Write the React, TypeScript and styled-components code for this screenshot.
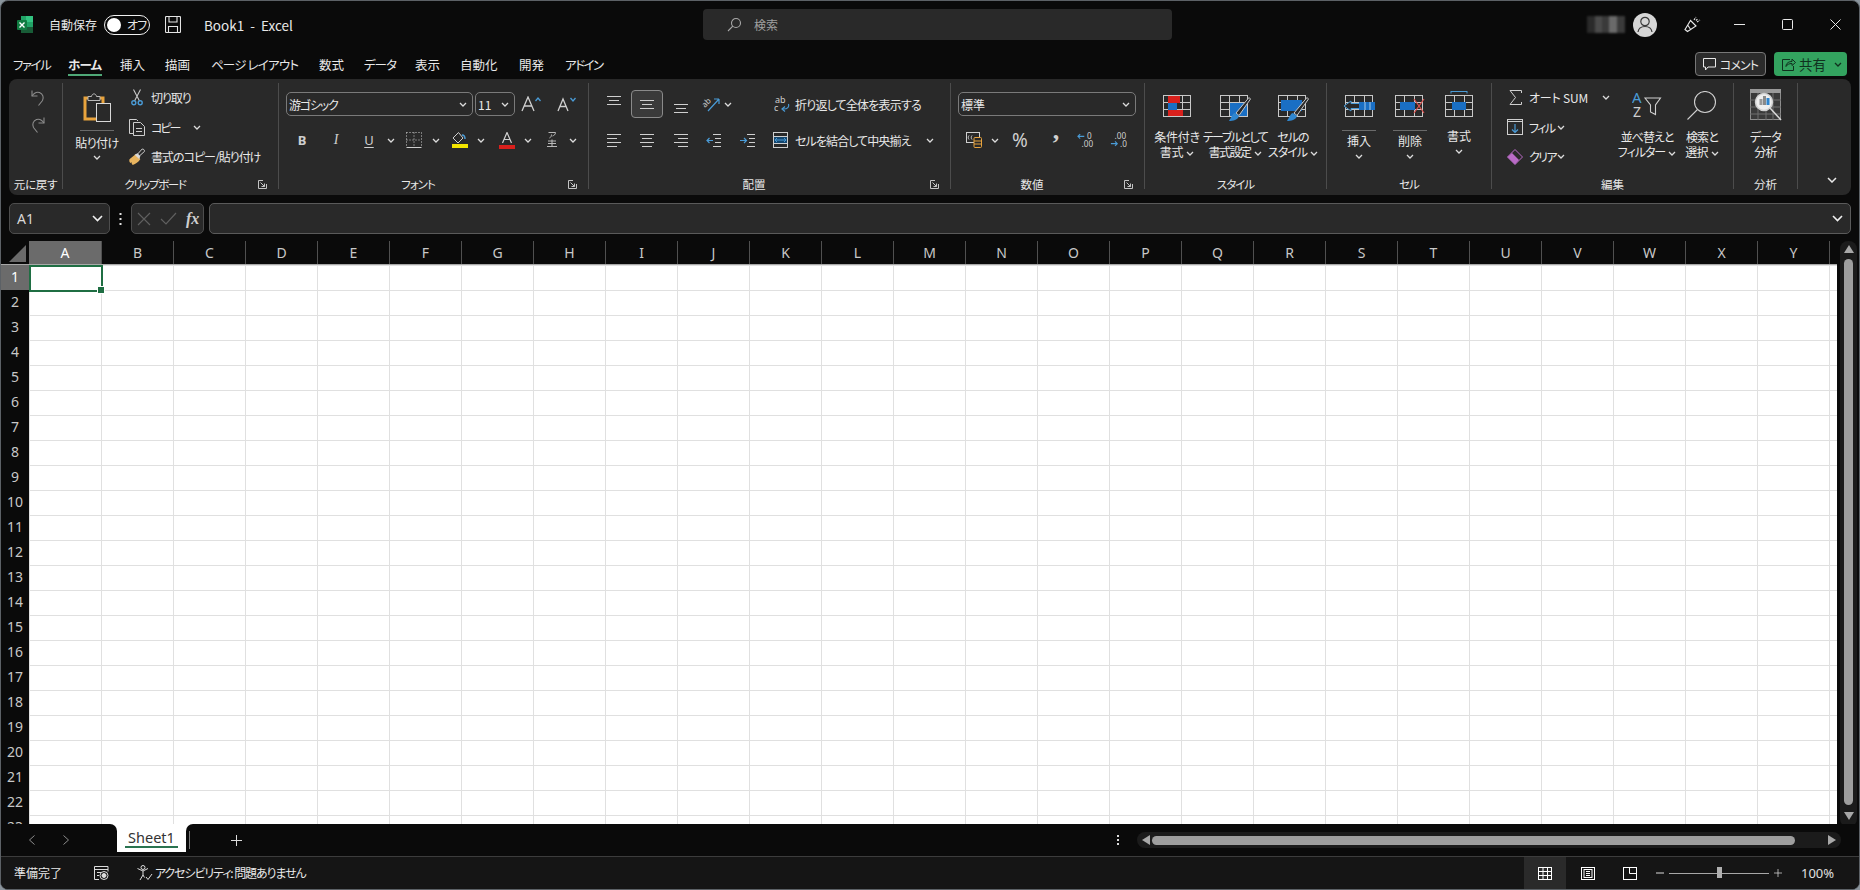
import React, {FC, ReactNode} from 'react';
import styled, {createGlobalStyle} from 'styled-components';

const G = '#cfcfcf';
const BLUE = '#1a6fc4';
const LBLUE = '#4a9bd6';
const RED = '#d9201c';

const GlobalStyle = createGlobalStyle`
    html, body {
        margin: 0;
        padding: 0;
        width: 1860px;
        height: 890px;
        overflow: hidden;
        background: #8a949c;
    }
    * {
        box-sizing: border-box;
    }
    body {
        font-family: "Noto Sans CJK JP", "Noto Sans", sans-serif;
        font-feature-settings: "palt";
        font-size: 12px;
        color: #e8e8e8;
    }
`;

const Window = styled.div`
    width: 1860px;
    height: 890px;
    background: #0a0a0a;
    border: 1px solid #5c6166;
    border-radius: 8px;
    overflow: hidden;
    display: flex;
    flex-direction: column;
`;

/* title bar */
const TitleBar = styled.div`
    height: 49px;
    padding-bottom: 2px;
    display: flex;
    align-items: center;
    flex-shrink: 0;
`;
const TitleLeft = styled.div`
    width: 702px;
    display: flex;
    align-items: center;
    padding-left: 16px;
`;
const AutoSave = styled.span`
    margin-left: 16px;
    width: 55px;
    white-space: nowrap;
    font-size: 12px;
`;
const Toggle = styled.span`
    width: 46px;
    height: 20px;
    border: 1px solid #f0f0f0;
    border-radius: 10px;
    display: flex;
    align-items: center;
    padding-left: 2px;
    font-size: 12px;
    gap: 6px;
    white-space: nowrap;
    letter-spacing: -0.8px;
    &::before {
        content: '';
        flex-shrink: 0;
        width: 14px;
        height: 14px;
        border-radius: 50%;
        background: #fff;
    }
`;
const SaveSlot = styled.span`
    margin-left: 15px;
    display: flex;
`;
const DocTitle = styled.span`
    margin-left: 23px;
    white-space: pre;
    font-size: 13.5px;
`;
const SearchBox = styled.div`
    width: 469px;
    height: 31px;
    background: #292929;
    border-radius: 4px;
    display: flex;
    align-items: center;
    padding-left: 23px;
    gap: 12px;
    color: #a0a0a0;
    font-size: 12px;
`;
const TitleRight = styled.div`
    flex: 1;
    display: flex;
    align-items: center;
`;
const BlurName = styled.span`
    margin-left: 415px;
    width: 38px;
    height: 17px;
    filter: blur(0.8px);
    background:
        linear-gradient(90deg, #2a2a2a 0 20%, #4a4a4a 20% 40%, #3a3a3a 40% 58%, #6a6a6a 58% 78%, #3a3a3a 78% 100%);
`;
const Avatar = styled.span`
    margin-left: 8px;
    width: 24px;
    height: 24px;
    border-radius: 50%;
    background: #d6d6d6;
    display: flex;
    align-items: center;
    justify-content: center;
`;
const WinSlot = styled.span<{$ml: number}>`
    margin-left: ${p => p.$ml}px;
    display: flex;
`;

/* tab row */
const MenuRow = styled.div`
    height: 29px;
    display: flex;
    flex-shrink: 0;
    padding-left: 12px;
`;
const MenuTab = styled.span<{$w: number; $ls?: number; $active?: boolean}>`
    width: ${p => p.$w}px;
    flex-shrink: 0;
    white-space: nowrap;
    font-size: 12.5px;
    line-height: 30px;
    letter-spacing: ${p => p.$ls || 0}px;
    font-weight: ${p => (p.$active ? 700 : 400)};
    position: relative;
    &::after {
        content: ${p => (p.$active ? "''" : 'none')};
        position: absolute;
        left: 0;
        top: 24px;
        width: 34px;
        height: 2px;
        background: #4fa877;
    }
`;
const MenuRight = styled.div`
    margin-left: 1080px;
    display: flex;
    gap: 8px;
    padding-top: 2px;
`;
const CommentButton = styled.span`
    width: 71px;
    height: 24px;
    border: 1px solid #777;
    border-radius: 4px;
    background: #2b2b2b;
    display: flex;
    align-items: center;
    justify-content: center;
    gap: 4px;
    font-size: 12px;
    letter-spacing: -0.9px;
`;
const ShareButton = styled.span`
    width: 73px;
    height: 24px;
    border-radius: 4px;
    background: #33a35f;
    color: #10301e;
    display: flex;
    align-items: center;
    padding-left: 8px;
    gap: 3px;
    font-size: 13.5px;
    svg:last-child {
        margin-left: 5px;
    }
`;

/* ribbon */
const Ribbon = styled.div`
    height: 116px;
    margin: 0 8px;
    width: 1842px;
    flex-shrink: 0;
    background: #292929;
    border-radius: 8px;
    padding-top: 4px;
    display: flex;
    align-items: flex-start;
`;
const Group = styled.div<{$w: number; $last?: boolean}>`
    width: ${p => p.$w}px;
    height: 106px;
    flex-shrink: 0;
    border-right: ${p => (p.$last ? 'none' : '1px solid #4c4c4c')};
    display: flex;
    flex-direction: column;
`;
const GroupBody = styled.div<{$pl?: number}>`
    flex: 1;
    min-height: 0;
    display: flex;
    padding-left: ${p => p.$pl || 0}px;
`;
const GroupFoot = styled.div<{$launcher?: boolean; $ls?: number}>`
    height: 15px;
    display: grid;
    grid-template-columns: ${p => (p.$launcher ? '1fr 31px' : '1fr')};
    line-height: 20px;
    font-size: 11.5px;
    letter-spacing: ${p => p.$ls || 0}px;
    text-align: center;
    white-space: nowrap;
`;
const LauncherSlot = styled.span`
    display: flex;
    align-items: center;
    justify-content: center;
    height: 20px;
`;
const UndoColumn = styled.div`
    flex: 1;
    display: flex;
    flex-direction: column;
    align-items: center;
    padding: 6px 0 0 5px;
    gap: 9px;
`;
const BigColumn = styled.div<{$w: number; $pt?: number; $ml?: number}>`
    width: ${p => p.$w}px;
    margin-left: ${p => p.$ml || 0}px;
    flex-shrink: 0;
    display: flex;
    flex-direction: column;
    align-items: center;
    padding-top: ${p => p.$pt || 0}px;
`;
const IconBox = styled.span<{$h: number}>`
    height: ${p => p.$h}px;
    display: flex;
    align-items: flex-start;
    justify-content: center;
`;
const SplitLine = styled.span<{$mt: number}>`
    width: 34px;
    height: 1px;
    background: #6a6a6a;
    margin-top: ${p => p.$mt}px;
`;
const BigText = styled.span<{$mt: number; $ls?: number}>`
    margin-top: ${p => p.$mt}px;
    font-size: 12px;
    line-height: 15px;
    text-align: center;
    white-space: nowrap;
    letter-spacing: ${p => (p.$ls === undefined ? -0.5 : p.$ls)}px;
    svg {
        margin-left: 3px;
        vertical-align: 1px;
    }
`;
const SmallChev = styled.span<{$mt: number}>`
    margin-top: ${p => p.$mt}px;
    display: flex;
`;
const Stack = styled.div<{$w: number; $ml?: number}>`
    width: ${p => p.$w}px;
    margin-left: ${p => p.$ml || 0}px;
    flex-shrink: 0;
    display: flex;
    flex-direction: column;
`;
const StackRow = styled.div`
    height: 29.5px;
    display: flex;
    align-items: center;
`;
const TwoRows = styled.div`
    display: flex;
    flex-direction: column;
    padding-top: 9px;
    gap: 12px;
`;
const ToolRow = styled.div`
    height: 24px;
    display: flex;
    align-items: center;
`;
const Tool = styled.span<{$w: number; $ml?: number; $shift?: number}>`
    width: ${p => p.$w}px;
    margin-left: ${p => p.$ml || 0}px;
    margin-top: ${p => p.$shift || 0}px;
    flex-shrink: 0;
    display: flex;
    align-items: center;
    justify-content: center;
`;
const SelectedTool = styled(Tool)`
    height: 28px;
    border: 1px solid #8a8a8a;
    border-radius: 4px;
    background: #3a3a3a;
`;
const ToolText = styled.span<{$w?: number; $ml?: number; $ls?: number}>`
    width: ${p => (p.$w ? `${p.$w}px` : 'auto')};
    margin-left: ${p => p.$ml || 0}px;
    flex-shrink: 0;
    white-space: nowrap;
    font-size: 12px;
    letter-spacing: ${p => (p.$ls === undefined ? -0.7 : p.$ls)}px;
`;
const FontGlyph = styled.span<{$bold?: boolean; $italic?: boolean; $serif?: boolean; $under?: boolean; $size?: number; $up?: number}>`
    font-family: ${p => (p.$serif ? '"Liberation Serif", serif' : '"Noto Sans", sans-serif')};
    font-weight: ${p => (p.$bold ? 700 : 400)};
    font-style: ${p => (p.$italic ? 'italic' : 'normal')};
    font-size: ${p => p.$size || 13}px;
    margin-top: ${p => (p.$up ? -p.$up : 0)}px;
    text-decoration: ${p => (p.$under ? 'underline' : 'none')};
    text-underline-offset: 2px;
    color: ${G};
    line-height: 1;
`;
const ComboBox = styled.span<{$w: number; $ml?: number; $ls?: number}>`
    width: ${p => p.$w}px;
    height: 24px;
    margin-left: ${p => p.$ml || 0}px;
    flex-shrink: 0;
    border: 1px solid #7a7a7a;
    border-radius: 5px;
    display: flex;
    align-items: center;
    justify-content: space-between;
    padding: 0 5px 0 2px;
    font-size: 12px;
    letter-spacing: ${p => p.$ls || 0}px;
    white-space: nowrap;
`;
const CollapseSlot = styled.div`
    flex: 1;
    height: 106px;
    display: flex;
    align-items: flex-end;
    padding: 0 0 6px 29px;
`;

/* formula bar */
const FormulaBar = styled.div`
    height: 31px;
    margin-top: 8px;
    flex-shrink: 0;
    display: flex;
    align-items: center;
    padding-left: 8px;
    width: 1850px;
`;
const NameBox = styled.div`
    width: 101px;
    height: 31px;
    background: #292929;
    border: 1px solid #4d4d4d;
    border-radius: 5px;
    display: flex;
    align-items: center;
    justify-content: space-between;
    padding: 0 6px 0 7px;
    font-family: "Noto Sans", sans-serif;
    font-size: 14px;
    color: #d8d8d8;
`;
const Dots = styled.span`
    width: 21px;
    display: flex;
    justify-content: center;
`;
const FxBox = styled.div`
    width: 73px;
    height: 31px;
    background: #292929;
    border: 1px solid #4d4d4d;
    border-radius: 5px;
    display: flex;
    align-items: center;
    padding-left: 5px;
    gap: 9px;
`;
const FormulaInput = styled.div`
    flex: 1;
    margin-left: 5px;
    height: 31px;
    background: #292929;
    border: 1px solid #5a5a5a;
    border-radius: 5px;
    display: flex;
    align-items: center;
    justify-content: flex-end;
    padding-right: 7px;
`;

/* sheet */
const SheetArea = styled.div`
    height: 583px;
    margin-top: 7px;
    flex-shrink: 0;
    display: flex;
`;
const SheetMain = styled.div`
    width: 1836px;
    display: flex;
    flex-direction: column;
    overflow: hidden;
`;
const ColHeaders = styled.div`
    height: 24px;
    display: flex;
    flex-shrink: 0;
    border-bottom: 1px solid #a8a8a8;
`;
const Corner = styled.div`
    width: 28px;
    display: flex;
    align-items: flex-end;
    justify-content: flex-end;
    padding: 0 3px 2px 0;
`;
const ColHead = styled.div<{$on?: boolean}>`
    width: ${p => (p.$on ? 73 : 72)}px;
    flex-shrink: 0;
    display: flex;
    align-items: center;
    justify-content: center;
    font-family: "Noto Sans", sans-serif;
    font-size: 14px;
    color: ${p => (p.$on ? '#fff' : '#c8c8c8')};
    background: ${p => (p.$on ? '#6b6b6b' : 'transparent')};
    border-right: 1px solid #505050;
`;
const SheetBody = styled.div`
    flex: 1;
    display: flex;
    min-height: 0;
`;
const RowHeads = styled.div`
    width: 28px;
    flex-shrink: 0;
`;
const RowHead = styled.div<{$on?: boolean}>`
    height: 25px;
    padding-bottom: 2px;
    display: flex;
    align-items: center;
    justify-content: center;
    font-family: "Noto Sans", sans-serif;
    font-size: 14px;
    color: ${p => (p.$on ? '#fff' : '#c8c8c8')};
    background: ${p => (p.$on ? '#6b6b6b' : 'transparent')};
`;
const Cells = styled.div`
    flex: 1;
    position: relative;
    background-color: #fff;
    background-image:
        linear-gradient(90deg, transparent 71px, #e0e0e0 71px),
        linear-gradient(180deg, transparent 24px, #e0e0e0 24px);
    background-size: 72px 25px;
    background-position: 1px 1px;
`;
const Selection = styled.div`
    position: absolute;
    left: 0;
    top: 0;
    width: 74px;
    height: 27px;
    border: 2px solid #1f6e43;
    &::after {
        content: '';
        position: absolute;
        right: -4px;
        bottom: -4px;
        width: 6px;
        height: 6px;
        background: #1f6e43;
        border: 1px solid #fff;
    }
`;
const VScroll = styled.div`
    width: 17px;
    margin: 0 0 -3px 3px;
    background: #1b1b1b;
    border-radius: 8px;
    display: flex;
    flex-direction: column;
    align-items: center;
    padding: 4px 0 7px;
`;
const VThumb = styled.div`
    flex: 1;
    width: 9px;
    margin: 6px 0 7px;
    border-radius: 5px;
    background: #9e9e9e;
`;

/* sheet tabs */
const TabBar = styled.div`
    height: 32px;
    flex-shrink: 0;
    display: flex;
    background: linear-gradient(#fff 0 28px, #0a0a0a 28px);
`;
const TabNav = styled.div`
    width: 116px;
    background: #0a0a0a;
    border-radius: 0 7px 0 0;
    display: flex;
    align-items: center;
    padding-left: 28px;
    gap: 28px;
`;
const SheetTab = styled.div`
    width: 69px;
    height: 28px;
    background: #fff;
    border-radius: 0 0 6px 6px;
    color: #333;
    font-family: "Noto Sans", sans-serif;
    font-size: 14.5px;
    text-align: center;
    line-height: 27px;
    position: relative;
    &::after {
        content: '';
        position: absolute;
        left: 8px;
        right: 8px;
        bottom: 4px;
        height: 2px;
        background: #2a7350;
    }
`;
const TabRest = styled.div`
    flex: 1;
    background: #0a0a0a;
    border-radius: 7px 0 0 0;
    display: flex;
    align-items: center;
`;
const TabSep = styled.span`
    margin-left: 3px;
    width: 1px;
    height: 18px;
    background: #7a7a7a;
`;
const PlusSlot = styled.span`
    margin-left: 41px;
    display: flex;
`;
const MoreDots = styled.span`
    margin-left: 875px;
    display: flex;
`;
const HScroll = styled.div`
    margin-left: 17px;
    width: 704px;
    height: 16px;
    background: #1b1b1b;
    border-radius: 8px;
    display: flex;
    align-items: center;
    padding: 0 5px;
`;
const HThumb = styled.div`
    width: 643px;
    height: 9px;
    margin: 0 33px 0 2px;
    border-radius: 5px;
    background: #9e9e9e;
`;

/* status bar */
const StatusBar = styled.div`
    flex: 1;
    background: #151515;
    border-top: 1px solid #3c3c3c;
    display: flex;
    align-items: center;
    padding-left: 13px;
    font-size: 12px;
`;
const StatusText = styled.span<{$w?: number; $ml?: number; $ls?: number}>`
    width: ${p => (p.$w ? `${p.$w}px` : 'auto')};
    margin-left: ${p => p.$ml || 0}px;
    margin-top: -2px;
    white-space: nowrap;
    flex-shrink: 0;
    letter-spacing: ${p => p.$ls || 0}px;
`;
const StatusSlot = styled.span<{$ml: number}>`
    margin-left: ${p => p.$ml}px;
    display: flex;
`;
const ViewButton = styled.span<{$on?: boolean; $ml?: number}>`
    width: 42px;
    height: 32px;
    margin-left: ${p => p.$ml || 0}px;
    background: ${p => (p.$on ? '#2a2a2a' : 'transparent')};
    display: flex;
    align-items: center;
    justify-content: center;
    flex-shrink: 0;
`;
const ZoomSlider = styled.span`
    width: 100px;
    height: 1px;
    margin-left: 5px;
    background: #a8a8a8;
    position: relative;
    &::after {
        content: '';
        position: absolute;
        left: 48px;
        top: -6px;
        width: 5px;
        height: 11px;
        background: #b0b0b0;
    }
`;
const ZoomValue = styled.span`
    margin-left: 19px;
    font-family: "Noto Sans", sans-serif;
    font-size: 13px;
    color: #e0e0e0;
`;

/* icons */
const Chev: FC<{c?: string}> = ({c = '#dcdcdc'}) => (
    <svg width="8" height="5" viewBox="0 0 8 5" fill="none">
        <path d="M1 1l3 3 3-3" stroke={c} strokeWidth="1.3" />
    </svg>
);

const Launcher = () => (
    <svg width="9" height="9" viewBox="0 0 9 9" fill="none" stroke="#c4c4c4">
        <path d="M8.5 4V8.5H0.5V0.5H5" />
        <path d="M2.5 2.5L6.5 6.5M6.5 3.5V6.5H3.5" />
    </svg>
);

const ExcelLogo = () => (
    <svg width="16" height="19" viewBox="0 0 16 19">
        <path d="M4 1h11a1 1 0 0 1 1 1v15a1 1 0 0 1-1 1H4z" fill="#21a366" />
        <rect x="9" y="1" width="7" height="6" fill="#33c481" />
        <rect x="4" y="12" width="12" height="6" fill="#185c37" />
        <rect x="0" y="5" width="10" height="10" rx="1" fill="#107c41" />
        <path d="M2.5 7.5l5 5M7.5 7.5l-5 5" stroke="#fff" strokeWidth="1.4" />
    </svg>
);

const SaveIcon = () => (
    <svg width="16" height="17" viewBox="0 0 16 17" fill="none" stroke="#e4e4e4" strokeWidth="1.1">
        <rect x="0.5" y="0.5" width="15" height="16" rx="1" />
        <path d="M4 1v5h8V1M3.5 16v-5.500h9V16" />
    </svg>
);

const SearchIcon = () => (
    <svg width="16" height="16" viewBox="0 0 16 16" fill="none" stroke="#a8a8a8" strokeWidth="1.1">
        <circle cx="10" cy="6" r="4.5" />
        <path d="M6.8 9.2L2 14" />
    </svg>
);

const UserIcon = () => (
    <svg width="16" height="17" viewBox="0 0 16 17" fill="none" stroke="#3a3a3a" strokeWidth="1.2">
        <circle cx="8" cy="5.5" r="4.2" />
        <path d="M1 16c.5-3.5 3-5.5 7-5.5s6.500 2 7 5.500" />
    </svg>
);

const FeedbackIcon = () => (
    <svg width="17" height="17" viewBox="0 0 17 17" fill="none" stroke="#e8e8e8" strokeWidth="1.1">
        <path d="M1 13.500L6.500 4.500l5.500 5.500-8.500 5.500zM4 9.500l3 4.500" />
        <path d="M10 4l2-3M13 6l3-2M12 4.500l2-2" strokeDasharray="2 1" />
    </svg>
);

const WinMin = () => (
    <svg width="11" height="11" viewBox="0 0 11 11" stroke="#e8e8e8">
        <path d="M0 5.500h11" />
    </svg>
);
const WinMax = () => (
    <svg width="11" height="11" viewBox="0 0 11 11" stroke="#e8e8e8" fill="none">
        <rect x="0.5" y="0.5" width="10" height="10" rx="1" />
    </svg>
);
const WinClose = () => (
    <svg width="11" height="11" viewBox="0 0 11 11" stroke="#e8e8e8">
        <path d="M0.500 0.500l10 10M10.500 0.500l-10 10" />
    </svg>
);

const CommentIcon = () => (
    <svg width="13" height="13" viewBox="0 0 13 13" fill="none" stroke="#e8e8e8">
        <path d="M0.500 0.500h12v8.500H5L2.500 12V9h-2z" />
    </svg>
);
const ShareIcon = () => (
    <svg width="14" height="14" viewBox="0 0 14 14" fill="none" stroke="#10301e">
        <path d="M8 2.500H0.500v11h11V9" />
        <path d="M4 9.500c0-3.500 3-5 6-5V2l3.500 3.500L10 8.500V6.500c-3 0-5 1-6 3z" />
    </svg>
);

const UndoIcon: FC<{flip?: boolean}> = ({flip}) => (
    <svg width="18" height="18" viewBox="0 0 18 18" fill="none" stroke="#8c8c8c" strokeWidth="1.1"
        transform={flip ? 'scale(-1,1)' : undefined}>
        <path d="M3 1.500V7h5.500" />
        <path d="M3 7c2-3 4.500-4.500 7.500-3.500 3.500 1.500 4.500 5 3 8L9.500 16.500" />
    </svg>
);

const PasteIcon = () => (
    <svg width="28" height="31" viewBox="0 0 28 31" fill="none">
        <path d="M2 6v21h18V6H2z" stroke="#e8a33d" strokeWidth="3" />
        <rect x="5" y="6" width="12" height="3" fill="#292929" />
        <path d="M5 8.500V4.500h3.500C9 1 13 1 13.500 4.500H17v4z" stroke="#b8b8b8" fill="#292929" />
        <rect x="13.500" y="11.500" width="14" height="18" fill="#292929" stroke="#d8d8d8" />
    </svg>
);

const ScissorsIcon = () => (
    <svg width="12" height="17" viewBox="0 0 12 17" fill="none">
        <path d="M2.500 0.500l6 11.500M9.500 0.500L3.500 12" stroke="#c8c8c8" strokeWidth="1.1" />
        <circle cx="2.800" cy="13.800" r="2" stroke={LBLUE} strokeWidth="1.4" />
        <circle cx="9.200" cy="13.800" r="2" stroke={LBLUE} strokeWidth="1.4" />
    </svg>
);

const CopyIcon = () => (
    <svg width="16" height="17" viewBox="0 0 16 17" fill="none" stroke="#cfcfcf">
        <path d="M4 14.500H0.500V0.500H7.500L9 2" />
        <path d="M4.500 3.500h7l4 4v9h-11zM7 9.500h6M7 12.500h6" />
    </svg>
);

const PainterIcon = () => (
    <svg width="17" height="18" viewBox="0 0 17 18" fill="none">
        <path d="M0.500 11.500L7 6l5 5.500c-2 3-5 5-8 6-1-1-1.500-2-1-3l-1.500 1c-1-1-1.500-2-1-4z" fill="#e8b45f" />
        <path d="M6 6.500l3-1.500 3 3-1 3.500z" fill="#d8d8d8" />
        <path d="M9 6l5-5.500c1.500 0 2.500 1 2.500 2.500L11 8" stroke="#d8d8d8" />
    </svg>
);

const FontGrow: FC<{up?: boolean}> = ({up}) => (
    <svg width="20" height="16" viewBox="0 0 20 16" fill="none">
        <path d={up ? 'M1 15L7 1l6 14M3.500 10h7' : 'M2 15L7 3l5 12M4 10.500h6'} stroke={G} strokeWidth="1.3" />
        <path d={up ? 'M14.500 5l2.500-3 2.500 3' : 'M14.500 2l2.500 3 2.500-3'} stroke={LBLUE} strokeWidth="1.3" />
    </svg>
);

const BordersIcon = () => (
    <svg width="16" height="16" viewBox="0 0 16 16" fill="none" stroke={G}>
        <path d="M0.500 15.500h15" />
        <path d="M0.500 0.500h15v15M0.500 0.500v15M8 0.500v15M0.500 8h15" strokeDasharray="1 2" />
    </svg>
);

const FillIcon = () => (
    <svg width="16" height="16" viewBox="0 0 16 16" fill="none">
        <path d="M6.500 0.500L1 6l5 5 5-5z" stroke={G} />
        <path d="M10 3c2 0 3 1.500 3 4" stroke={LBLUE} strokeWidth="1.500" />
        <rect x="0" y="12" width="16" height="4" fill="#f4e500" />
    </svg>
);

const FontColorIcon = () => (
    <svg width="16" height="17" viewBox="0 0 16 17" fill="none">
        <path d="M3.500 11L8 0.500 12.500 11M5 7.500h6" stroke={G} strokeWidth="1.200" />
        <rect x="0" y="13" width="16" height="4" fill={RED} />
    </svg>
);

const PhoneticIcon = () => (
    <svg width="14" height="16" viewBox="0 0 14 16" fill="none" stroke="#b8b8b8">
        <path d="M3.500 0.500h7c0 2-1.500 3-3 3.500M6.500 2.500c0 2-1 3-2 3.500" />
        <path d="M3 9h8M3 11.500h8M2 14.500h10M7 7.500v7" strokeWidth="1.100" />
    </svg>
);

const Lines: FC<{kind: 'left' | 'center' | 'right'}> = ({kind}) => {
    const rows = [0.5, 4.5, 8.5, 12.5];
    const size = (i: number) => (i % 2 === 0 ? 14 : 10);
    return (
        <svg width="14" height="13" viewBox="0 0 14 13" stroke={G}>
            {rows.map((y, i) => {
                const w = size(i);
                const x = kind === 'left' ? 0 : kind === 'right' ? 14 - w : (14 - w) / 2;
                return <path key={y} d={`M${x} ${y}h${w}`} />;
            })}
        </svg>
    );
};

const VAlignIcon = () => (
    <svg width="14" height="9" viewBox="0 0 14 9" stroke={G}>
        <path d="M0 0.500h14M2 4.500h10M0 8.500h14" />
    </svg>
);

const SvgLabel = styled.text`
    font-family: "Noto Sans", sans-serif;
`;

const OrientIcon = () => (
    <svg width="18" height="16" viewBox="0 0 18 16" fill="none">
        <SvgLabel x="0" y="9" fontSize="8" fill={G} transform="rotate(-45 5 7)">ab</SvgLabel>
        <path d="M17 3L6 15M17 3h-5M17 3v5" stroke={LBLUE} strokeWidth="1.200" />
    </svg>
);

const WrapIcon = () => (
    <svg width="16" height="18" viewBox="0 0 16 18" fill="none">
        <SvgLabel x="1" y="8" fontSize="9" fill={G}>ab</SvgLabel>
        <SvgLabel x="0" y="16" fontSize="9" fill={G}>c</SvgLabel>
        <path d="M14.500 9c1 3-1 5-5 5M11 11.500L8 14l3 2.500" stroke={LBLUE} strokeWidth="1.200" />
    </svg>
);

const IndentIcon: FC<{inc?: boolean}> = ({inc}) => (
    <svg width="15" height="13" viewBox="0 0 15 13" fill="none">
        <path d="M7 0.500h8M9 4.500h6M9 8.500h6M7 12.500h8" stroke={G} />
        <path d={inc ? 'M0 6.500h6M4 4l2.500 2.500L4 9' : 'M7 6.500H1M3.500 4L1 6.500 3.500 9'} stroke={LBLUE} strokeWidth="1.200" />
    </svg>
);

const MergeIcon = () => (
    <svg width="15" height="16" viewBox="0 0 15 16" fill="none">
        <rect x="0.500" y="0.500" width="14" height="15" stroke={G} />
        <path d="M0.500 4.500h14M0.500 11.500h14" stroke={G} />
        <rect x="1" y="5" width="13" height="6" fill="#14466e" />
        <path d="M2 8h11M4 6l-2 2 2 2M11 6l2 2-2 2" stroke={LBLUE} />
    </svg>
);

const AccountingIcon = () => (
    <svg width="18" height="16" viewBox="0 0 18 16" fill="none">
        <rect x="0.500" y="0.500" width="13" height="10" stroke={G} />
        <path d="M3 3.500c-1 1-1 3 0 4M6 3.500c-1 1-1 3 0 4" stroke={G} />
        <rect x="8" y="5.500" width="7.500" height="10" rx="1" fill="#292929" stroke="#e8a33d" />
        <path d="M8 9h7.500M8 12h7.500" stroke="#e8a33d" />
    </svg>
);

const DecimalIcon: FC<{inc?: boolean}> = ({inc}) => (
    <svg width="22" height="18" viewBox="0 0 22 18" fill="none">
        {inc ? (
            <>
                <path d="M8 5H1M3.500 2.500L1 5l2.500 2.500" stroke={LBLUE} strokeWidth="1.200" />
                <SvgLabel x="11" y="8" fontSize="9" fill={G}>0</SvgLabel>
                <SvgLabel x="5" y="17" fontSize="9" fill={G}>.00</SvgLabel>
            </>
        ) : (
            <>
                <SvgLabel x="5" y="8" fontSize="9" fill={G}>.00</SvgLabel>
                <path d="M1 13h7M5.500 10.500L8 13l-2.500 2.500" stroke={LBLUE} strokeWidth="1.200" />
                <SvgLabel x="11" y="17" fontSize="9" fill={G}>.0</SvgLabel>
            </>
        )}
    </svg>
);

const GridLines: FC<{x: number; w: number; y?: number}> = ({x, w, y = 0}) => {
    const cols = [w / 3, (2 * w) / 3];
    return (
        <g stroke="#c8c8c8" fill="none">
            <rect x={x + 0.5} y={y + 0.5} width={w - 1} height="21" />
            <path d={`M${x} ${y + 7.500}h${w}M${x} ${y + 14.500}h${w}`} />
            {cols.map(c => (
                <path key={c} d={`M${x + Math.round(c) + 0.5} ${y}v22`} />
            ))}
        </g>
    );
};

const CondFormatIcon = () => (
    <svg width="28" height="22" viewBox="0 0 28 22">
        <GridLines x={0} w={28} />
        <rect x="5" y="1" width="12" height="7" fill={RED} />
        <rect x="5" y="8" width="9" height="7" fill={BLUE} />
        <rect x="5" y="15" width="15" height="6" fill={RED} />
    </svg>
);

const Brush = () => (
    <g>
        <path d="M29 2.500L16 18l3 2.500L30.500 4z" fill="#292929" stroke="#c8c8c8" />
        <path d="M15 18c-2 0-3 3-6 8 4 0 9-1 10-5z" fill="#2f86cf" />
    </g>
);

const TableFormatIcon = () => (
    <svg width="31" height="27" viewBox="0 0 31 27">
        <GridLines x={0} w={28} />
        <rect x="10" y="8" width="17" height="13" fill={BLUE} />
        <Brush />
    </svg>
);

const CellStyleIcon = () => (
    <svg width="31" height="27" viewBox="0 0 31 27">
        <GridLines x={0} w={28} />
        <rect x="3" y="5" width="21" height="11" fill={BLUE} />
        <Brush />
    </svg>
);

const InsertIcon = () => (
    <svg width="32" height="22" viewBox="0 0 32 22">
        <GridLines x={2} w={28} />
        <rect x="16" y="7" width="16" height="8" fill={BLUE} />
        <path d="M16 8.500H8V6L1 11l7 5v-2.500h8" fill="#292929" stroke={LBLUE} />
        <path d="M22 7v8M27 7v8" stroke="#c8e0f4" strokeWidth="0.800" />
    </svg>
);

const DeleteIcon = () => (
    <svg width="30" height="22" viewBox="0 0 30 22">
        <GridLines x={0} w={28} />
        <rect x="5" y="7" width="15" height="8" fill={BLUE} />
        <path d="M19 4l10 14M29 4L19 18" stroke="#e0524e" strokeWidth="1.200" fill="none" />
    </svg>
);

const FormatCellIcon = () => (
    <svg width="28" height="26" viewBox="0 0 28 26">
        <path d="M6 0.500h16M6 0v2.500M22 0v2.500" stroke={LBLUE} fill="none" />
        <GridLines x={0} w={28} y={4} />
        <rect x="7" y="11" width="14" height="8" fill={BLUE} />
    </svg>
);

const SigmaIcon = () => (
    <svg width="13" height="15" viewBox="0 0 13 15" fill="none" stroke={G}>
        <path d="M12.500 3V0.500H1L6.500 7.500 1 14.500h11.500V12" />
    </svg>
);

const FillDownIcon = () => (
    <svg width="16" height="16" viewBox="0 0 16 16" fill="none">
        <rect x="0.500" y="0.500" width="15" height="15" stroke={G} />
        <path d="M0.500 2.500h15" stroke={G} />
        <path d="M8 5v8M5 10.500L8 13.500l3-3" stroke={LBLUE} strokeWidth="1.200" />
    </svg>
);

const EraserIcon = () => (
    <svg width="16" height="16" viewBox="0 0 16 16">
        <path d="M8 0.500L15.500 8 8 15.500 0.500 8z" fill="none" stroke="#b96bc6" />
        <path d="M5 4l7 7-4 4.500L0.500 8z" fill="#b96bc6" />
    </svg>
);

const SortFilterIcon = () => (
    <svg width="30" height="27" viewBox="0 0 30 27" fill="none">
        <SvgLabel x="0" y="12" fontSize="15" fill={LBLUE}>A</SvgLabel>
        <SvgLabel x="1" y="26" fontSize="14" fill={G}>Z</SvgLabel>
        <path d="M13 7h15.500L23.500 14v9.500l-5-2.500V14z" stroke={G} strokeWidth="1.100" />
    </svg>
);

const FindIcon = () => (
    <svg width="30" height="29" viewBox="0 0 30 29" fill="none" stroke={G} strokeWidth="1.100">
        <circle cx="18" cy="11" r="10.500" />
        <path d="M10.500 18.500L0.500 28.500" />
    </svg>
);

const AnalysisIcon = () => (
    <svg width="32" height="32" viewBox="0 0 32 32" fill="none">
        <rect x="0.500" y="0.500" width="30" height="30" stroke="#8e8e8e" fill="#3a3a3a" />
        <rect x="0" y="0" width="31" height="4" fill="#9a9a9a" />
        <path d="M0 11h31M0 18h31M0 25h31M8 4v27M16 4v27M23 4v27" stroke="#6e6e6e" />
        <circle cx="14" cy="13" r="8.500" fill="#efefef" stroke="#d0d0d0" strokeWidth="1.500" />
        <path d="M20 19l11 12" stroke="#d8d8d8" strokeWidth="1.500" />
        <rect x="9.500" y="10" width="3" height="6" fill="#9a9a9a" />
        <rect x="13" y="7" width="3" height="9" fill="#8a8a8a" />
        <rect x="16.500" y="9" width="3" height="7" fill="#2f86cf" />
    </svg>
);

const CrossIcon: FC<{c: string; s?: number}> = ({c, s = 14}) => (
    <svg width={s} height={s} viewBox="0 0 14 14" stroke={c} strokeWidth="1.200">
        <path d="M1 1l12 12M13 1L1 13" />
    </svg>
);
const CheckIcon = () => (
    <svg width="17" height="13" viewBox="0 0 17 13" fill="none" stroke="#5f5f5f" strokeWidth="1.200">
        <path d="M1 7l5 5L16 1" />
    </svg>
);
const VDots = () => (
    <svg width="3" height="12" viewBox="0 0 3 12" fill="#e0e0e0">
        <rect x="0.500" y="0" width="2" height="2" />
        <rect x="0.500" y="5" width="2" height="2" />
        <rect x="0.500" y="10" width="2" height="2" />
    </svg>
);
const CornerTriangle = () => (
    <svg width="17" height="17" viewBox="0 0 17 17">
        <path d="M17 0v17H0z" fill="#6a6a6a" />
    </svg>
);
const Tri: FC<{dir: 'up' | 'down' | 'left' | 'right'}> = ({dir}) => {
    const d = {up: 'M0 8L5 0l5 8z', down: 'M0 0l5 8 5-8z', left: 'M8 0L0 5l8 5z', right: 'M0 0l8 5-8 5z'}[dir];
    return (
        <svg width={dir === 'up' || dir === 'down' ? 10 : 8} height={dir === 'up' || dir === 'down' ? 8 : 10} fill="#a8a8a8">
            <path d={d} />
        </svg>
    );
};
const NavArrow: FC<{right?: boolean}> = ({right}) => (
    <svg width="6" height="10" viewBox="0 0 6 10" fill="none" stroke="#8c8c8c">
        <path d={right ? 'M0.500 0.500l5 4.500-5 4.500' : 'M5.500 0.500l-5 4.500 5 4.500'} />
    </svg>
);
const Plus: FC<{s: number}> = ({s}) => (
    <svg width={s} height={s} viewBox="0 0 11 11" stroke="#dcdcdc">
        <path d="M5.500 0v11M0 5.500h11" />
    </svg>
);
const MacroIcon = () => (
    <svg width="15" height="14" viewBox="0 0 15 14" fill="none" stroke="#dcdcdc">
        <path d="M5 13.500H0.500V0.500h13.500v5M0.500 3.500h13.500M3 6.500h4M3 9.500h2" />
        <circle cx="10" cy="9.500" r="4" />
        <circle cx="10" cy="9.500" r="2" fill="#dcdcdc" />
    </svg>
);
const AccessIcon = () => (
    <svg width="16" height="16" viewBox="0 0 16 16" fill="none" stroke="#dcdcdc">
        <circle cx="6" cy="2.500" r="2" />
        <path d="M0.500 3.500L6 6l5-2.500M6 6v4l-3 5M6 10l1.500 2.500" />
        <path d="M9 12l2 2.500 4-5.500" />
    </svg>
);
const NormalViewIcon = () => (
    <svg width="14" height="13" viewBox="0 0 14 13" fill="none" stroke="#fff">
        <rect x="0.500" y="0.500" width="13" height="12" />
        <path d="M0.500 4.500h13M0.500 8.500h13M5 0.500v12M9.500 0.500v12" />
    </svg>
);
const PageViewIcon = () => (
    <svg width="14" height="13" viewBox="0 0 14 13" fill="none" stroke="#fff">
        <rect x="0.500" y="0.500" width="13" height="12" />
        <rect x="3" y="2.500" width="8" height="8" />
        <path d="M5 4.500h4M5 6.500h4M5 8.500h4" />
    </svg>
);
const BreakViewIcon = () => (
    <svg width="14" height="13" viewBox="0 0 14 13" fill="none" stroke="#fff">
        <rect x="0.500" y="0.500" width="13" height="12" />
        <path d="M6.500 0.500v6h7" />
    </svg>
);

const TABS = [
    {label: 'ファイル', w: 55, ls: -1.5},
    {label: 'ホーム', w: 52, ls: -0.8, active: true},
    {label: '挿入', w: 45},
    {label: '描画', w: 46},
    {label: 'ページ レイアウト', w: 108, ls: -0.8},
    {label: '数式', w: 45},
    {label: 'データ', w: 51, ls: -1},
    {label: '表示', w: 45},
    {label: '自動化', w: 59},
    {label: '開発', w: 46},
    {label: 'アドイン', w: 50, ls: -1.5},
];

const COLS = 'ABCDEFGHIJKLMNOPQRSTUVWXY'.split('');
const ROWS = Array.from({length: 23}, (_, i) => i + 1);

const Foot: FC<{label: string; launcher?: boolean; ls?: number}> = ({label, launcher, ls}) => (
    <GroupFoot $launcher={launcher} $ls={ls}>
        <span>{label}</span>
        {launcher && (
            <LauncherSlot>
                <Launcher />
            </LauncherSlot>
        )}
    </GroupFoot>
);

const BigTool: FC<{
    w: number;
    icon: ReactNode;
    h?: number;
    pt?: number;
    mt?: number;
    ls?: number;
    first: string;
    second: string;
    chev?: boolean;
}> = ({w, icon, h = 22, pt = 12, mt = 12, ls, first, second, chev = true}) => (
    <BigColumn $w={w} $pt={pt}>
        <IconBox $h={h}>{icon}</IconBox>
        <BigText $mt={mt} $ls={ls}>
            {first}
            <br />
            {second}
            {chev && <Chev />}
        </BigText>
    </BigColumn>
);

const SplitTool: FC<{w: number; ml?: number; icon: ReactNode; text: string}> = ({w, ml, icon, text}) => (
    <BigColumn $w={w} $pt={12} $ml={ml}>
        <IconBox $h={22}>{icon}</IconBox>
        <SplitLine $mt={13} />
        <BigText $mt={2} $ls={0}>{text}</BigText>
        <SmallChev $mt={6}>
            <Chev />
        </SmallChev>
    </BigColumn>
);

const RibbonBar = () => (
    <Ribbon>
        <Group $w={54}>
            <GroupBody>
                <UndoColumn>
                    <UndoIcon />
                    <UndoIcon flip />
                </UndoColumn>
            </GroupBody>
            <Foot label="元に戻す" ls={-0.3} />
        </Group>

        <Group $w={216}>
            <GroupBody $pl={3}>
                <BigColumn $w={62} $pt={9}>
                    <IconBox $h={31}>
                        <PasteIcon />
                    </IconBox>
                    <SplitLine $mt={7} />
                    <BigText $mt={4}>貼り付け</BigText>
                    <SmallChev $mt={5}>
                        <Chev />
                    </SmallChev>
                </BigColumn>
                <Stack $w={140} $ml={1}>
                    <StackRow>
                        <Tool $w={16}>
                            <ScissorsIcon />
                        </Tool>
                        <ToolText $ml={6} $ls={-1.1}>切り取り</ToolText>
                    </StackRow>
                    <StackRow>
                        <Tool $w={16}>
                            <CopyIcon />
                        </Tool>
                        <ToolText $w={26} $ml={6} $ls={-2}>コピー</ToolText>
                        <Tool $w={8} $ml={16}>
                            <Chev />
                        </Tool>
                    </StackRow>
                    <StackRow>
                        <Tool $w={16}>
                            <PainterIcon />
                        </Tool>
                        <ToolText $ml={6} $ls={-1}>書式のコピー/貼り付け</ToolText>
                    </StackRow>
                </Stack>
            </GroupBody>
            <Foot label="クリップボード" launcher ls={-1.4} />
        </Group>

        <Group $w={310}>
            <GroupBody $pl={7}>
                <TwoRows>
                    <ToolRow>
                        <ComboBox $w={187} $ls={-1.2}>
                            游ゴシック
                            <Chev />
                        </ComboBox>
                        <ComboBox $w={40} $ml={2}>
                            11
                            <Chev />
                        </ComboBox>
                        <Tool $w={20} $ml={6}>
                            <FontGrow up />
                        </Tool>
                        <Tool $w={20} $ml={15}>
                            <FontGrow />
                        </Tool>
                    </ToolRow>
                    <ToolRow>
                        <Tool $w={10} $ml={11}>
                            <FontGlyph $bold>B</FontGlyph>
                        </Tool>
                        <Tool $w={10} $ml={24}>
                            <FontGlyph $italic $serif $size={14}>I</FontGlyph>
                        </Tool>
                        <Tool $w={14} $ml={21}>
                            <FontGlyph $under>U</FontGlyph>
                        </Tool>
                        <Tool $w={8} $ml={11}>
                            <Chev />
                        </Tool>
                        <Tool $w={16} $ml={11}>
                            <BordersIcon />
                        </Tool>
                        <Tool $w={8} $ml={10}>
                            <Chev />
                        </Tool>
                        <Tool $w={16} $ml={12}>
                            <FillIcon />
                        </Tool>
                        <Tool $w={8} $ml={9}>
                            <Chev />
                        </Tool>
                        <Tool $w={16} $ml={14}>
                            <FontColorIcon />
                        </Tool>
                        <Tool $w={8} $ml={9}>
                            <Chev />
                        </Tool>
                        <Tool $w={14} $ml={13}>
                            <PhoneticIcon />
                        </Tool>
                        <Tool $w={8} $ml={10}>
                            <Chev />
                        </Tool>
                    </ToolRow>
                </TwoRows>
            </GroupBody>
            <Foot label="フォント" launcher ls={-1} />
        </Group>

        <Group $w={362}>
            <GroupBody $pl={17}>
                <TwoRows>
                    <ToolRow>
                        <Tool $w={16} $shift={-8}>
                            <VAlignIcon />
                        </Tool>
                        <SelectedTool $w={32} $ml={9}>
                            <VAlignIcon />
                        </SelectedTool>
                        <Tool $w={16} $ml={10} $shift={8}>
                            <VAlignIcon />
                        </Tool>
                        <Tool $w={18} $ml={13}>
                            <OrientIcon />
                        </Tool>
                        <Tool $w={8} $ml={4}>
                            <Chev />
                        </Tool>
                        <Tool $w={16} $ml={42}>
                            <WrapIcon />
                        </Tool>
                        <ToolText $ml={5} $ls={-0.8}>折り返して全体を表示する</ToolText>
                    </ToolRow>
                    <ToolRow>
                        <Tool $w={16}>
                            <Lines kind="left" />
                        </Tool>
                        <Tool $w={16} $ml={17}>
                            <Lines kind="center" />
                        </Tool>
                        <Tool $w={16} $ml={18}>
                            <Lines kind="right" />
                        </Tool>
                        <Tool $w={16} $ml={16}>
                            <IndentIcon />
                        </Tool>
                        <Tool $w={16} $ml={18}>
                            <IndentIcon inc />
                        </Tool>
                        <Tool $w={16} $ml={17}>
                            <MergeIcon />
                        </Tool>
                        <ToolText $w={117} $ml={7} $ls={-0.9}>セルを結合して中央揃え</ToolText>
                        <Tool $w={8} $ml={14}>
                            <Chev />
                        </Tool>
                    </ToolRow>
                </TwoRows>
            </GroupBody>
            <Foot label="配置" launcher />
        </Group>

        <Group $w={194}>
            <GroupBody $pl={7}>
                <TwoRows>
                    <ToolRow>
                        <ComboBox $w={178}>
                            標準
                            <Chev />
                        </ComboBox>
                    </ToolRow>
                    <ToolRow>
                        <Tool $w={18} $ml={8}>
                            <AccountingIcon />
                        </Tool>
                        <Tool $w={8} $ml={7}>
                            <Chev />
                        </Tool>
                        <Tool $w={20} $ml={11}>
                            <FontGlyph $size={19}>%</FontGlyph>
                        </Tool>
                        <Tool $w={8} $ml={22}>
                            <FontGlyph $bold $serif $size={26} $up={18}>,</FontGlyph>
                        </Tool>
                        <Tool $w={20} $ml={17}>
                            <DecimalIcon inc />
                        </Tool>
                        <Tool $w={20} $ml={13}>
                            <DecimalIcon />
                        </Tool>
                    </ToolRow>
                </TwoRows>
            </GroupBody>
            <Foot label="数値" launcher />
        </Group>

        <Group $w={182}>
            <GroupBody $pl={3}>
                <BigTool w={58} icon={<CondFormatIcon />} first="条件付き" second="書式" ls={-0.3} />
                <BigTool w={58} icon={<TableFormatIcon />} first="テーブルとして" second="書式設定" ls={-1.5} />
                <BigTool w={58} icon={<CellStyleIcon />} first="セルの" second="スタイル" ls={-1} />
            </GroupBody>
            <Foot label="スタイル" ls={-1} />
        </Group>

        <Group $w={165}>
            <GroupBody $pl={8}>
                <SplitTool w={48} icon={<InsertIcon />} text="挿入" />
                <SplitTool w={48} ml={3} icon={<DeleteIcon />} text="削除" />
                <BigColumn $w={48} $ml={1} $pt={8}>
                    <IconBox $h={26}>
                        <FormatCellIcon />
                    </IconBox>
                    <BigText $mt={11} $ls={0}>書式</BigText>
                    <SmallChev $mt={6}>
                        <Chev />
                    </SmallChev>
                </BigColumn>
            </GroupBody>
            <Foot label="セル" ls={-1} />
        </Group>

        <Group $w={242}>
            <GroupBody $pl={15}>
                <Stack $w={110}>
                    <StackRow>
                        <Tool $w={16}>
                            <SigmaIcon />
                        </Tool>
                        <ToolText $w={57} $ml={6} $ls={-0.2}>オート SUM</ToolText>
                        <Tool $w={8} $ml={16}>
                            <Chev />
                        </Tool>
                    </StackRow>
                    <StackRow>
                        <Tool $w={16}>
                            <FillDownIcon />
                        </Tool>
                        <ToolText $w={24} $ml={6} $ls={-1.6}>フィル</ToolText>
                        <Tool $w={8} $ml={4}>
                            <Chev />
                        </Tool>
                    </StackRow>
                    <StackRow>
                        <Tool $w={16}>
                            <EraserIcon />
                        </Tool>
                        <ToolText $w={24} $ml={6} $ls={-1.6}>クリア</ToolText>
                        <Tool $w={8} $ml={4}>
                            <Chev />
                        </Tool>
                    </StackRow>
                </Stack>
                <BigTool w={60} icon={<SortFilterIcon />} h={26} pt={8} mt={12} first="並べ替えと" second="フィルター" ls={-1} />
                <BigTool w={50} icon={<FindIcon />} h={26} pt={8} mt={12} first="検索と" second="選択" ls={-0.8} />
            </GroupBody>
            <Foot label="編集" />
        </Group>

        <Group $w={64}>
            <GroupBody>
                <BigTool w={63} icon={<AnalysisIcon />} h={32} pt={6} mt={8} first="データ" second="分析" chev={false} ls={-0.8} />
            </GroupBody>
            <Foot label="分析" />
        </Group>

        <CollapseSlot>
            <svg width="10" height="6" viewBox="0 0 10 6" fill="none" stroke="#e8e8e8" strokeWidth="1.500">
                <path d="M1 1l4 4 4-4" />
            </svg>
        </CollapseSlot>
    </Ribbon>
);

const App = () => (
    <Window>
        <GlobalStyle />
        <TitleBar>
            <TitleLeft>
                <ExcelLogo />
                <AutoSave>自動保存</AutoSave>
                <Toggle>オフ</Toggle>
                <SaveSlot>
                    <SaveIcon />
                </SaveSlot>
                <DocTitle>{'Book1  -  Excel'}</DocTitle>
            </TitleLeft>
            <SearchBox>
                <SearchIcon />
                検索
            </SearchBox>
            <TitleRight>
                <BlurName />
                <Avatar>
                    <UserIcon />
                </Avatar>
                <WinSlot $ml={27}>
                    <FeedbackIcon />
                </WinSlot>
                <WinSlot $ml={33}>
                    <WinMin />
                </WinSlot>
                <WinSlot $ml={37}>
                    <WinMax />
                </WinSlot>
                <WinSlot $ml={37}>
                    <WinClose />
                </WinSlot>
            </TitleRight>
        </TitleBar>

        <MenuRow>
            {TABS.map(t => (
                <MenuTab key={t.label} $w={t.w} $ls={t.ls} $active={t.active}>
                    {t.label}
                </MenuTab>
            ))}
            <MenuRight>
                <CommentButton>
                    <CommentIcon />
                    コメント
                </CommentButton>
                <ShareButton>
                    <ShareIcon />
                    共有
                    <Chev c="#10301e" />
                </ShareButton>
            </MenuRight>
        </MenuRow>

        <RibbonBar />

        <FormulaBar>
            <NameBox>
                A1
                <svg width="11" height="7" viewBox="0 0 11 7" fill="none" stroke="#f0f0f0" strokeWidth="1.600">
                    <path d="M1 1l4.500 4.500L10 1" />
                </svg>
            </NameBox>
            <Dots>
                <VDots />
            </Dots>
            <FxBox>
                <CrossIcon c="#5f5f5f" />
                <CheckIcon />
                <FontGlyph $italic $bold $serif $size={16}>fx</FontGlyph>
            </FxBox>
            <FormulaInput>
                <svg width="11" height="7" viewBox="0 0 11 7" fill="none" stroke="#f0f0f0" strokeWidth="1.600">
                    <path d="M1 1l4.500 4.500L10 1" />
                </svg>
            </FormulaInput>
        </FormulaBar>

        <SheetArea>
            <SheetMain>
                <ColHeaders>
                    <Corner>
                        <CornerTriangle />
                    </Corner>
                    {COLS.map((c, i) => (
                        <ColHead key={c} $on={i === 0}>
                            {c}
                        </ColHead>
                    ))}
                </ColHeaders>
                <SheetBody>
                    <RowHeads>
                        {ROWS.map(r => (
                            <RowHead key={r} $on={r === 1}>
                                {r}
                            </RowHead>
                        ))}
                    </RowHeads>
                    <Cells>
                        <Selection />
                    </Cells>
                </SheetBody>
            </SheetMain>
            <VScroll>
                <Tri dir="up" />
                <VThumb />
                <Tri dir="down" />
            </VScroll>
        </SheetArea>

        <TabBar>
            <TabNav>
                <NavArrow />
                <NavArrow right />
            </TabNav>
            <SheetTab>Sheet1</SheetTab>
            <TabRest>
                <TabSep />
                <PlusSlot>
                    <Plus s={11} />
                </PlusSlot>
                <MoreDots>
                    <svg width="3" height="10" viewBox="0 0 3 10" fill="#dcdcdc">
                        <rect width="2" height="2" />
                        <rect y="4" width="2" height="2" />
                        <rect y="8" width="2" height="2" />
                    </svg>
                </MoreDots>
                <HScroll>
                    <Tri dir="left" />
                    <HThumb />
                    <Tri dir="right" />
                </HScroll>
            </TabRest>
        </TabBar>

        <StatusBar>
            <StatusText $w={48}>準備完了</StatusText>
            <StatusSlot $ml={32}>
                <MacroIcon />
            </StatusSlot>
            <StatusSlot $ml={28}>
                <AccessIcon />
            </StatusSlot>
            <StatusText $w={1369} $ml={2} $ls={-1.1}>アクセシビリティ: 問題ありません</StatusText>
            <ViewButton $on>
                <NormalViewIcon />
            </ViewButton>
            <ViewButton $ml={1}>
                <PageViewIcon />
            </ViewButton>
            <ViewButton>
                <BreakViewIcon />
            </ViewButton>
            <StatusSlot $ml={5}>
                <svg width="8" height="8" viewBox="0 0 8 8" stroke="#dcdcdc">
                    <path d="M0 4h8" />
                </svg>
            </StatusSlot>
            <ZoomSlider />
            <StatusSlot $ml={5}>
                <Plus s={8} />
            </StatusSlot>
            <ZoomValue>100%</ZoomValue>
        </StatusBar>
    </Window>
);

export default App;
